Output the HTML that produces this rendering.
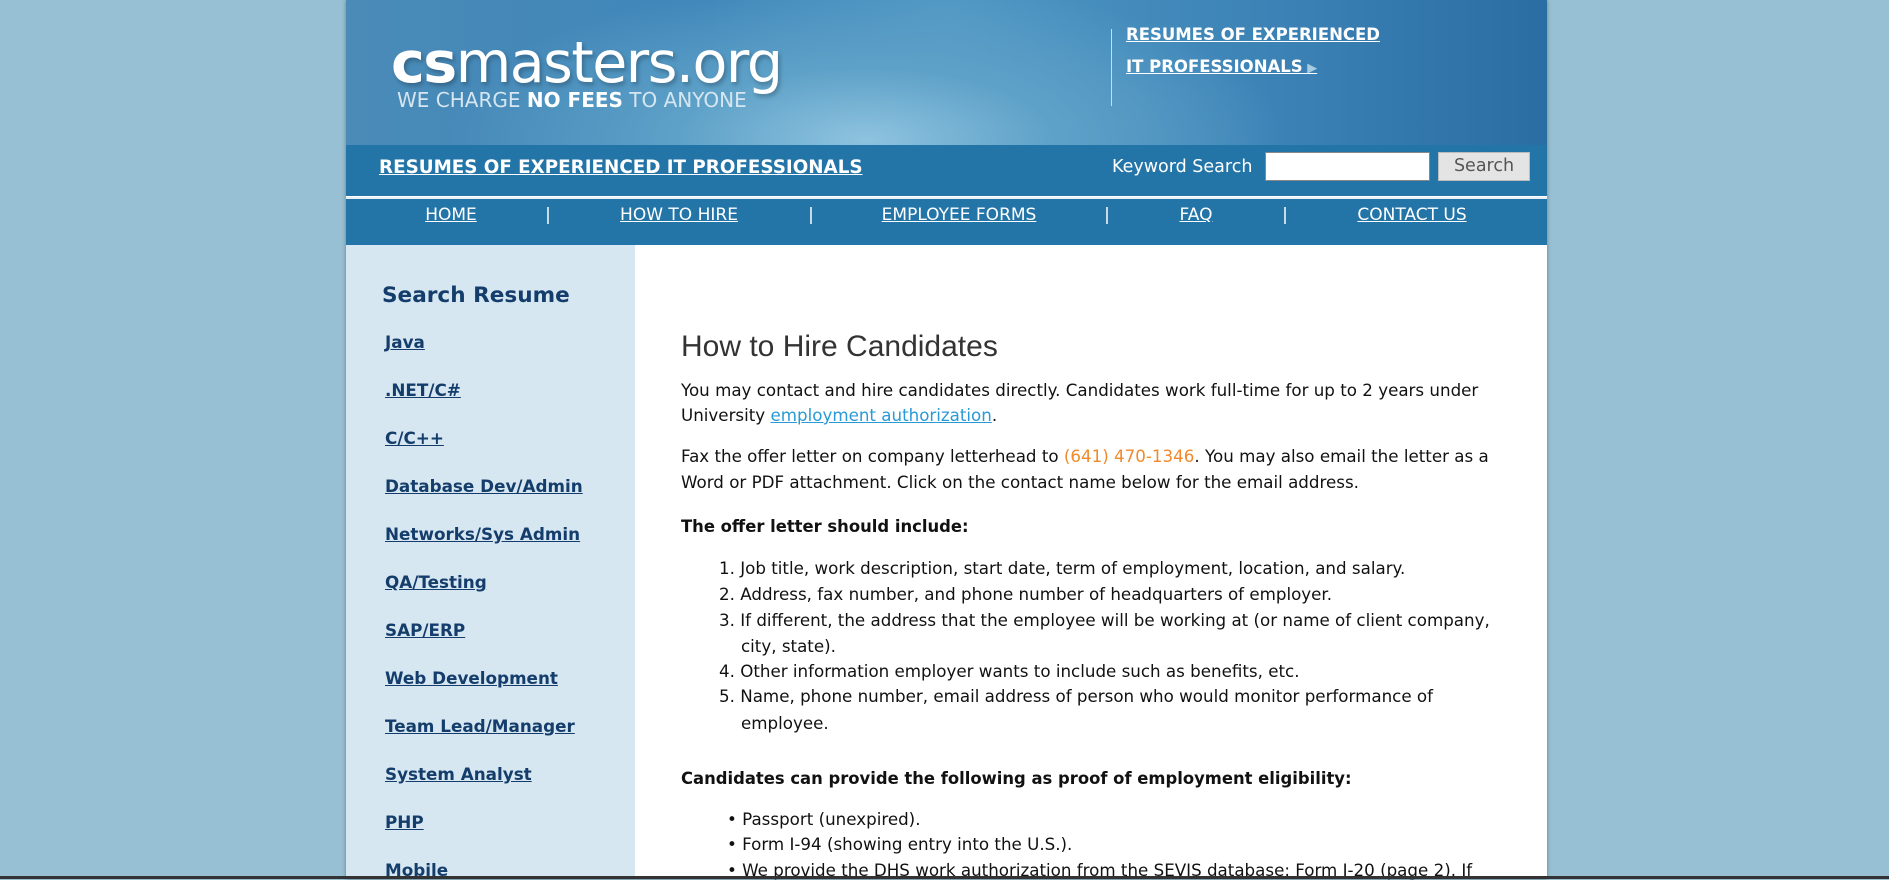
<!DOCTYPE html>
<html><head><meta charset="utf-8"><style>
*{margin:0;padding:0;box-sizing:border-box}
body{width:1889px;height:879px;overflow:hidden;background:#98c0d4;font-family:"DejaVu Sans","Liberation Sans",sans-serif;position:relative}
.wrap{position:absolute;left:346px;top:0;width:1201px;height:879px;background:#fff;box-shadow:0 0 4px rgba(0,0,0,.35)}
.hdr{position:absolute;left:0;top:0;width:1201px;height:145px;background:radial-gradient(ellipse 420px 160px at 520px 140px,#8ec3df 0%,#5ea1c8 45%,transparent 100%),linear-gradient(90deg,#4a8bb8 0%,#3f86b9 30%,#4f97c4 50%,#3a80b4 80%,#2a6da3 100%)}
.logo{position:absolute;left:45px;top:30px;color:#fff;font-family:"DejaVu Sans",sans-serif;font-size:57px;letter-spacing:-1.5px;text-shadow:2px 3px 4px rgba(0,0,0,.25)}
.logo b{font-weight:bold}
.logo span{font-weight:normal}
.tag{position:absolute;left:51px;top:88px;color:#d6e6f0;font-size:20px}
.tag b{color:#fff}
.vl{position:absolute;left:765px;top:29px;width:1px;height:77px;background:#c8dcea}
.hl{position:absolute;left:780px;color:#fff;font-weight:bold;font-size:16.5px;text-decoration:underline}
.bar{position:absolute;left:0;top:145px;width:1201px;height:51px;background:#2475a7}
.bar a{position:absolute;left:33px;top:12px;color:#fff;font-weight:bold;font-size:18.3px;text-decoration:underline}
.ks{position:absolute;left:766px;top:12px;color:#fff;font-size:17.5px}
.inp{position:absolute;left:919px;top:7px;width:165px;height:29px;background:#fff;border:1px solid #888}
.btn{position:absolute;left:1092px;top:7px;width:92px;height:29px;background:#e4e4e4;border:1px solid #bbb;color:#555;font-size:17.5px;text-align:center;line-height:27px}
.nav{position:absolute;left:0;top:197px;width:1201px;height:48px;background:#2475a7;border-top:2px solid #e8f0f6}
.nav span{position:absolute;top:6px;color:#fff;font-size:17px;transform:translateX(-50%)}
.nav .u{text-decoration:underline}
.side{position:absolute;left:0;top:245px;width:289px;height:634px;background:#d6e7f1}
.side h2{position:absolute;left:36px;top:38px;color:#143d6b;font-size:21.6px;font-weight:bold}
.side a{position:absolute;left:39px;color:#143d6b;font-weight:bold;font-size:16.8px;text-decoration:underline}
.c{position:absolute;left:335px;color:#111;font-size:16.7px;white-space:nowrap}
.c.b{font-weight:bold;font-size:16.4px}
h1{position:absolute;left:335px;top:330px;font-family:"Liberation Sans",sans-serif;font-weight:normal;font-size:30px;color:#333}
.bl{position:absolute;left:0;top:876px;width:1889px;height:3px;background:#333}
</style></head><body>
<div class="wrap">
<div class="hdr">
<div class="logo"><b>cs</b><span>masters.org</span></div>
<div class="tag">WE CHARGE <b>NO FEES</b> TO ANYONE</div>
<div class="vl"></div>
<div class="hl" style="top:25px">RESUMES OF EXPERIENCED</div>
<div class="hl" style="top:57px">IT PROFESSIONALS<span style="color:#a8cde2;text-decoration:none;font-size:13px"> ▶</span></div>
</div>
<div class="bar"><a>RESUMES OF EXPERIENCED IT PROFESSIONALS</a><div class="ks">Keyword Search</div><div class="inp"></div><div class="btn">Search</div></div>
<div class="nav">
<span class="u" style="left:105px">HOME</span><span style="left:202px">|</span>
<span class="u" style="left:333px">HOW TO HIRE</span><span style="left:465px">|</span>
<span class="u" style="left:613px">EMPLOYEE FORMS</span><span style="left:761px">|</span>
<span class="u" style="left:850px">FAQ</span><span style="left:939px">|</span>
<span class="u" style="left:1066px">CONTACT US</span>
</div>
<div class="side">
<h2>Search Resume</h2>
<a style="top:87px">Java</a>
<a style="top:135px">.NET/C#</a>
<a style="top:183px">C/C++</a>
<a style="top:231px">Database Dev/Admin</a>
<a style="top:279px">Networks/Sys Admin</a>
<a style="top:327px">QA/Testing</a>
<a style="top:375px">SAP/ERP</a>
<a style="top:423px">Web Development</a>
<a style="top:471px">Team Lead/Manager</a>
<a style="top:519px">System Analyst</a>
<a style="top:567px">PHP</a>
<a style="top:615px">Mobile</a>
</div>
<h1>How to Hire Candidates</h1>
<div class="c" style="top:380px">You may contact and hire candidates directly. Candidates work full-time for up to 2 years under</div>
<div class="c" style="top:405px">University <span style="color:#2a9ad6;text-decoration:underline">employment authorization</span>.</div>
<div class="c" style="top:446px">Fax the offer letter on company letterhead to <span style="color:#f08a2c">(641) 470-1346</span>. You may also email the letter as a</div>
<div class="c" style="top:472px">Word or PDF attachment. Click on the contact name below for the email address.</div>
<div class="c b" style="top:517px">The offer letter should include:</div>
<div class="c" style="top:558px;left:373px">1.&nbsp;Job title, work description, start date, term of employment, location, and salary.</div>
<div class="c" style="top:584px;left:373px">2.&nbsp;Address, fax number, and phone number of headquarters of employer.</div>
<div class="c" style="top:610px;left:373px">3.&nbsp;If different, the address that the employee will be working at (or name of client company,</div>
<div class="c" style="top:636px;left:395px">city, state).</div>
<div class="c" style="top:661px;left:373px">4.&nbsp;Other information employer wants to include such as benefits, etc.</div>
<div class="c" style="top:686px;left:373px">5.&nbsp;Name, phone number, email address of person who would monitor performance of</div>
<div class="c" style="top:713px;left:395px">employee.</div>
<div class="c b" style="top:769px">Candidates can provide the following as proof of employment eligibility:</div>
<div class="c" style="top:809px;left:381px">•&nbsp;Passport (unexpired).</div>
<div class="c" style="top:834px;left:381px">•&nbsp;Form I-94 (showing entry into the U.S.).</div>
<div class="c" style="top:860px;left:381px">•&nbsp;We provide the DHS work authorization from the SEVIS database: Form I-20 (page 2). If</div>
</div>
<div class="bl"></div>
</body></html>
